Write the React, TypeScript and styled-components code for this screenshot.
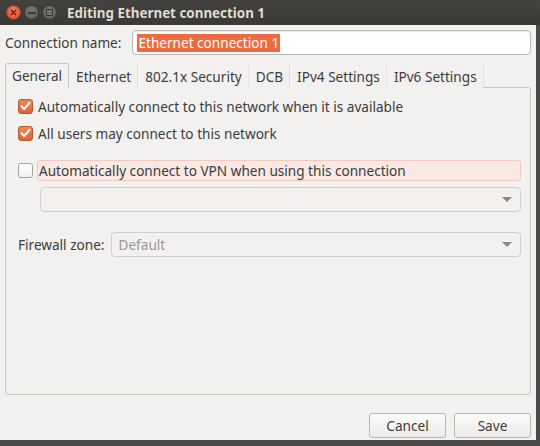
import React from "react";
import styled, { createGlobalStyle } from "styled-components";

const Global = createGlobalStyle`
  html, body { margin: 0; padding: 0; background: #5a5a58; }
  body { font-family: "Noto Sans", "DejaVu Sans", sans-serif; font-size: 13.6px; color: #3c3c3c; }
  * { box-sizing: border-box; }
`;

const Window = styled.div`
  width: 540px;
  height: 446px;
  display: flex;
  flex-direction: column;
  background: #4a4a48;
  overflow: hidden;
`;

const TitleBar = styled.div`
  height: 25px;
  flex: none;
  display: flex;
  align-items: center;
  padding-left: 6px;
  background: linear-gradient(#43423e, #3a3935);
`;

const WinBtn = styled.div<{ $kind: "close" | "min" | "max" }>`
  width: 15px;
  height: 15px;
  border-radius: 50%;
  margin-right: 3px;
  display: flex;
  align-items: center;
  justify-content: center;
  background: ${(p) =>
    p.$kind === "close"
      ? "radial-gradient(circle at 50% 35%, #f47c5a, #d84a2a)"
      : "radial-gradient(circle at 50% 35%, #7a7872, #5c5a55)"};
  border: 1px solid ${(p) => (p.$kind === "close" ? "#9e3a22" : "#3a3935")};
`;

const Title = styled.div`
  margin-left: 7px;
  font-family: "Noto Sans", "DejaVu Sans", sans-serif;
  font-weight: bold;
  font-size: 13.4px;
  color: #dfdbd2;
`;

const Body = styled.div`
  flex: 1;
  margin-right: 4px;
  margin-bottom: 6px;
  background: #f2f1f0;
  display: flex;
  flex-direction: column;
  padding: 5px 5px 0 5px;
`;

const NameRow = styled.div`
  display: flex;
  align-items: center;
  height: 25px;
`;

const Label = styled.span`
  white-space: nowrap;
  color: #3c3c3c;
`;

const NameEntry = styled.div`
  margin-left: 11px;
  flex: 1;
  height: 25px;
  border: 1px solid #bdb9b3;
  border-radius: 4px;
  background: #fff;
  display: flex;
  align-items: center;
  padding-left: 4px;
  box-shadow: inset 0 1px 1px rgba(0,0,0,0.08);
`;

const Selected = styled.span`
  background: #ee6b3f;
  color: #fff;
  padding: 0 1px;
  line-height: 18px;
`;

const Tabs = styled.div`
  display: flex;
  margin-top: 8px;
  height: 25px;
  align-items: stretch;
  position: relative;
  z-index: 1;
`;

const Tab = styled.div<{ $active?: boolean }>`
  padding: 0 6px;
  display: flex;
  align-items: center;
  white-space: nowrap;
  color: #3c3c3c;
  border: 1px solid ${(p) => (p.$active ? "#cac6c0" : "transparent")};
  border-bottom: ${(p) => (p.$active ? "1px solid #f2f1f0" : "none")};
  border-right: 1px solid ${(p) => (p.$active ? "#cac6c0" : "#e4e1dd")};
  border-radius: ${(p) => (p.$active ? "3px 3px 0 0" : "0")};
  background: #f2f1f0;
  height: ${(p) => (p.$active ? "25px" : "24px")};
  margin-top: ${(p) => (p.$active ? "0" : "1px")};
`;

const Panel = styled.div`
  height: 308px;
  margin-top: -1px;
  border: 1px solid #cac6c0;
  border-radius: 0 3px 3px 3px;
  padding: 7px 9px 0 12px;
  display: flex;
  flex-direction: column;
`;

const CheckRow = styled.div<{ $gap?: number }>`
  display: flex;
  align-items: center;
  height: 22px;
  margin-bottom: ${(p) => p.$gap ?? 0}px;
`;

const Box = styled.div<{ $checked?: boolean }>`
  width: 15px;
  height: 15px;
  border-radius: 3px;
  flex: none;
  margin-right: 5px;
  display: flex;
  align-items: center;
  justify-content: center;
  border: 1px solid ${(p) => (p.$checked ? "#b5582f" : "#a8a49e")};
  background: ${(p) =>
    p.$checked ? "linear-gradient(#ec8a5e, #d96539)" : "linear-gradient(#ffffff, #f1f0ee)"};
`;

const VpnLabel = styled.div`
  flex: 1;
  height: 21px;
  display: flex;
  align-items: center;
  padding-left: 1px;
  margin-left: -1px;
  border: 1px solid #f3cabd;
  border-radius: 3px;
  background: #f8e9e4;
`;

const Combo = styled.div<{ $indent?: number }>`
  height: 25px;
  margin-left: ${(p) => p.$indent ?? 0}px;
  flex: 1;
  border: 1px solid #d3d0cb;
  border-radius: 4px;
  background: #f2f1f0;
  display: flex;
  align-items: center;
  padding: 0 8px 0 6px;
  color: #9a9893;
`;

const ComboRow = styled.div<{ $top: number }>`
  display: flex;
  align-items: center;
  margin-top: ${(p) => p.$top}px;
`;

const Arrow = styled.div`
  margin-left: auto;
  width: 0;
  height: 0;
  border-left: 5px solid transparent;
  border-right: 5px solid transparent;
  border-top: 5px solid #8a8782;
`;

const Footer = styled.div`
  display: flex;
  justify-content: flex-end;
  gap: 8px;
  padding-top: 18px;
`;

const Button = styled.div`
  width: 77px;
  height: 25px;
  border: 1px solid #bab6b0;
  border-radius: 3px;
  background: linear-gradient(#fbfbfa, #ecebe9);
  display: flex;
  align-items: center;
  justify-content: center;
  color: #3c3c3c;
`;

const Check = () => (
  <svg width="11" height="10" viewBox="0 0 11 10">
    <path d="M1.5 5.2 L4.2 8 L9.5 1.8" fill="none" stroke="#fff" strokeWidth="2" strokeLinecap="round" strokeLinejoin="round" />
  </svg>
);

export default function App() {
  return (
    <>
      <Global />
      <Window>
        <TitleBar>
          <WinBtn $kind="close">
            <svg width="7" height="7" viewBox="0 0 7 7">
              <path d="M1 1 L6 6 M6 1 L1 6" stroke="#6a1e0e" strokeWidth="1.3" />
            </svg>
          </WinBtn>
          <WinBtn $kind="min">
            <svg width="8" height="2" viewBox="0 0 8 2">
              <rect width="8" height="2" fill="#3a3935" />
            </svg>
          </WinBtn>
          <WinBtn $kind="max">
            <svg width="7" height="7" viewBox="0 0 7 7">
              <rect x="0.5" y="0.5" width="6" height="6" fill="none" stroke="#3a3935" />
            </svg>
          </WinBtn>
          <Title>Editing Ethernet connection 1</Title>
        </TitleBar>
        <Body>
          <NameRow>
            <Label>Connection name:</Label>
            <NameEntry>
              <Selected>Ethernet connection 1</Selected>
            </NameEntry>
          </NameRow>
          <Tabs>
            <Tab $active>General</Tab>
            <Tab>Ethernet</Tab>
            <Tab>802.1x Security</Tab>
            <Tab>DCB</Tab>
            <Tab>IPv4 Settings</Tab>
            <Tab>IPv6 Settings</Tab>
          </Tabs>
          <Panel>
            <CheckRow $gap={5}>
              <Box $checked><Check /></Box>
              <Label>Automatically connect to this network when it is available</Label>
            </CheckRow>
            <CheckRow $gap={15}>
              <Box $checked><Check /></Box>
              <Label>All users may connect to this network</Label>
            </CheckRow>
            <CheckRow>
              <Box />
              <VpnLabel>Automatically connect to VPN when using this connection</VpnLabel>
            </CheckRow>
            <ComboRow $top={6}>
              <Combo $indent={22}><Arrow /></Combo>
            </ComboRow>
            <ComboRow $top={20}>
              <Label>Firewall zone:</Label>
              <Combo $indent={7}>Default<Arrow /></Combo>
            </ComboRow>
          </Panel>
          <Footer>
            <Button>Cancel</Button>
            <Button>Save</Button>
          </Footer>
        </Body>
      </Window>
    </>
  );
}
